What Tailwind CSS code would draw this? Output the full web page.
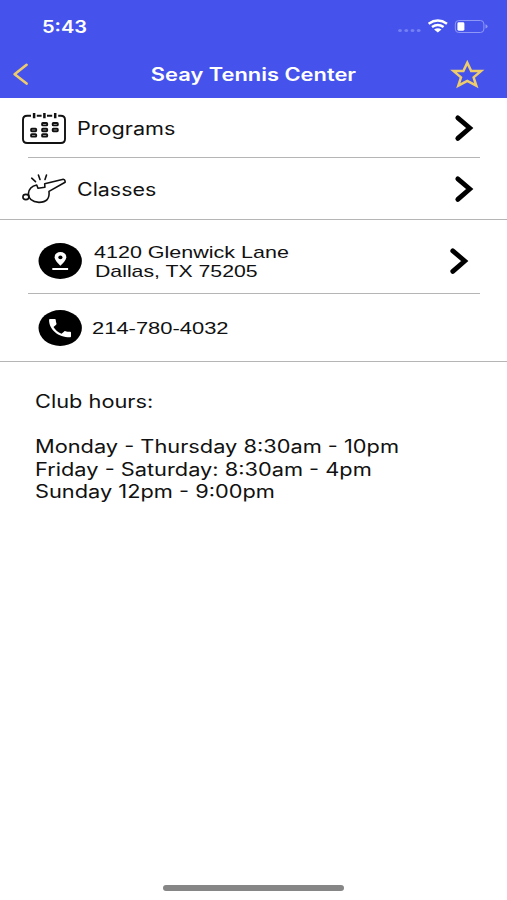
<!DOCTYPE html>
<html lang="en">
<head>
  <meta charset="utf-8">
  <title>Seay Tennis Center</title>
  <script src="https://cdn.jsdelivr.net/npm/@tailwindcss/browser@4"></script>
</head>
<body class="bg-white text-[#111] font-['Inter',sans-serif] h-screen flex flex-col overflow-hidden">

  <header class="bg-[#4553ec] text-white h-[98px] shrink-0 flex flex-col">
    <!-- status bar -->
    <div class="h-[52px] flex items-center justify-between pl-[42px] pr-[19px]">
      <span class="mt-[2px] inline-block origin-left scale-x-[1.18] text-[17px] font-semibold leading-5">5:43</span>
      <svg class="w-[90px] h-4" viewBox="398 18 90 16" fill="none">
        <g fill="#7480f3">
          <ellipse cx="400" cy="30.5" rx="1.9" ry="1.6"/>
          <ellipse cx="406.3" cy="30.5" rx="1.9" ry="1.6"/>
          <ellipse cx="412.5" cy="30.5" rx="1.9" ry="1.6"/>
          <ellipse cx="418.7" cy="30.5" rx="1.9" ry="1.6"/>
        </g>
        <path d="M428.6 23.7Q437.8 17.5 447 23.7M432 27Q437.8 22.9 443.6 27" stroke="#fff" stroke-width="2.5"/>
        <path d="M434.1 29.4Q437.8 27 441.5 29.4L437.8 32.5Z" fill="#fff"/>
        <rect x="455.3" y="20.5" width="28.6" height="12" rx="3.5" stroke="#8f98f6"/>
        <rect x="457.4" y="22.3" width="7" height="8.4" rx="1.4" fill="#fff"/>
        <path d="M485.5 24.3Q487.6 25 487.6 26.4T485.5 28.6Z" fill="#8f98f6"/>
      </svg>
    </div>
    <!-- title bar -->
    <div class="h-[46px] flex items-center pl-3 pr-[22px] pb-[2px]">
      <svg class="w-[17px] h-6" viewBox="0 0 17 24" fill="none" stroke="#eecb6b" stroke-width="2.6" stroke-linecap="round" stroke-linejoin="round">
        <path d="M14.6 2.8 2.6 12.2 14.6 21.6"/>
      </svg>
      <div class="flex-1 pl-[29px] pt-[2px] text-center">
        <h1 class="inline-block scale-x-[1.215] text-[18px] font-semibold leading-6 whitespace-nowrap">Seay Tennis Center</h1>
      </div>
      <svg class="w-9 h-[30px]" viewBox="449 59 36 30" fill="none" stroke="#eecb6b" stroke-width="2.5">
        <path d="M467.3 62.8 471.2 71.1 481 71.1 473.6 77.3 476.3 85.7 467.3 80.8 458.3 85.7 461 77.3 453.6 71.1 463.4 71.1Z"/>
      </svg>
    </div>
  </header>

  <main class="flex-1">
    <a class="h-[60px] flex items-center pl-[22px] pr-[33px]">
      <svg class="w-11 h-8 shrink-0" viewBox="0 0 44 32" fill="none" stroke="#111" stroke-width="1.9">
        <path d="M9 3.8H5.2Q1 3.8 1 7.8V27Q1 31 5.2 31H38.8Q43 31 43 27V7.8Q43 3.8 38.8 3.8H36.2M14.8 3.8H19.6M25 3.8H30.2"/>
        <path d="M12.1 1V6.3M22.4 1V6.3M33.2 1V6.3" stroke-width="2.5"/>
        <g stroke-width="1.9">
          <rect x="20.1" y="11" width="5.1" height="2.4" rx=".7"/>
          <rect x="30.7" y="11" width="5.1" height="2.4" rx=".7"/>
          <rect x="9.1" y="16.8" width="5.1" height="2.4" rx=".7"/>
          <rect x="20.1" y="16.8" width="5.1" height="2.4" rx=".7"/>
          <rect x="30.7" y="16.8" width="5.1" height="2.4" rx=".7"/>
          <rect x="9.1" y="22.2" width="5.1" height="2.4" rx=".7"/>
          <rect x="20.1" y="22.2" width="5.1" height="2.4" rx=".7"/>
        </g>
      </svg>
      <span class="ml-[11px] mt-[2px] inline-block origin-left scale-x-[1.2] text-[18px] leading-6">Programs</span>
      <svg class="ml-auto w-5 h-7" viewBox="0 0 20 28" fill="none" stroke="#000" stroke-width="4.8" stroke-linecap="round"><path d="M3.8 3.9 15.7 14 3.8 24.4"/></svg>
    </a>
    <hr class="ml-7 mr-[27px] -mt-px border-[#b5b5b5]">
    <a class="h-[62px] flex items-center pl-[22px] pr-[33px]">
      <svg class="w-11 h-8 shrink-0" viewBox="0 0 44 32" fill="none" stroke="#111" stroke-width="1.6" stroke-linejoin="round" stroke-linecap="round">
        <ellipse cx="3.9" cy="24" rx="3" ry="2.6"/>
        <path d="M14.7 12 16 15.3 22.9 14.3 22.7 10.8 41.3 6.2Q42.8 6.2 43.1 8.2V9.3L27 18.4Q28.2 29.4 17 29.4 6.4 28.8 6.4 20.6 7 13.6 14.7 12Z"/>
        <path d="M9.7 5.2 13.5 8.7M16.4 2 18 6.4M24.5 2 23 6.4"/>
      </svg>
      <span class="ml-[11px] mt-[2px] inline-block origin-left scale-x-[1.19] text-[18px] leading-6">Classes</span>
      <svg class="ml-auto w-5 h-7" viewBox="0 0 20 28" fill="none" stroke="#000" stroke-width="4.8" stroke-linecap="round"><path d="M3.8 3.9 15.7 14 3.8 24.4"/></svg>
    </a>
    <hr class="-mt-px border-[#b5b5b5]">
    <a class="h-[74px] pt-[7px] flex items-center pl-[38px] pr-[38px] font-['Liberation_Sans',sans-serif]">
      <svg class="w-11 h-9 shrink-0" viewBox="0 0 44 36">
        <ellipse cx="22.2" cy="18" rx="21.7" ry="17.9"/>
        <path d="M22.4 9Q28.3 9.3 28.3 14.6 27.8 18.2 22.4 22.7 17 18.2 16.6 14.6 16.6 9.3 22.4 9Z" fill="#fff"/>
        <ellipse cx="22.4" cy="14.4" rx="2.1" ry="1.8"/>
        <path d="M14.3 25H30.1V27H14.3Z" fill="#fff"/>
      </svg>
      <div class="ml-3 mt-[2px] text-[17px] leading-[19px] whitespace-nowrap">
        <p class="origin-left scale-x-[1.265]">4120 Glenwick Lane</p>
        <p class="origin-left scale-x-[1.25] ml-px">Dallas, TX 75205</p>
      </div>
      <svg class="ml-auto w-5 h-7" viewBox="0 0 20 28" fill="none" stroke="#000" stroke-width="4.8" stroke-linecap="round"><path d="M3.8 3.9 15.7 14 3.8 24.4"/></svg>
    </a>
    <hr class="ml-7 mr-[27px] -mt-px border-[#b5b5b5]">
    <a class="h-[68px] flex items-center pl-[38px] font-['Liberation_Sans',sans-serif]">
      <svg class="w-11 h-9 shrink-0" viewBox="0 0 44 36">
        <ellipse cx="22.2" cy="18" rx="21.7" ry="17.9"/>
        <path transform="translate(7.4 5.9) scale(1.22 1.02)" fill="#fff" d="M6.62 10.79c1.44 2.83 3.76 5.14 6.59 6.59l2.2-2.2c.27-.27.67-.36 1.02-.24 1.12.37 2.33.57 3.57.57.55 0 1 .45 1 1V20c0 .55-.45 1-1 1-9.39 0-17-7.61-17-17 0-.55.45-1 1-1h3.5c.55 0 1 .45 1 1 0 1.25.2 2.45.57 3.57.11.35.03.74-.25 1.02l-2.2 2.2z"/>
      </svg>
      <span class="ml-[10px] mt-[2px] inline-block origin-left scale-x-[1.29] text-[17px] leading-5">214-780-4032</span>
    </a>
    <hr class="-mt-px border-[#b5b5b5]">

    <div class="pl-[35px] pt-[29px]">
      <div class="inline-block origin-left scale-x-[1.21] text-[18px] leading-[22.5px] whitespace-nowrap">
        <p>Club hours:</p>
        <p class="mt-[22.5px]">Monday - Thursday 8:30am - 10pm</p>
        <p>Friday - Saturday: 8:30am - 4pm</p>
        <p>Sunday 12pm - 9:00pm</p>
      </div>
    </div>
  </main>

  <!-- home indicator -->
  <div class="mx-auto mb-[9px] w-[181px] h-[6px] shrink-0 rounded-full bg-[#868686]"></div>
</body>
</html>
